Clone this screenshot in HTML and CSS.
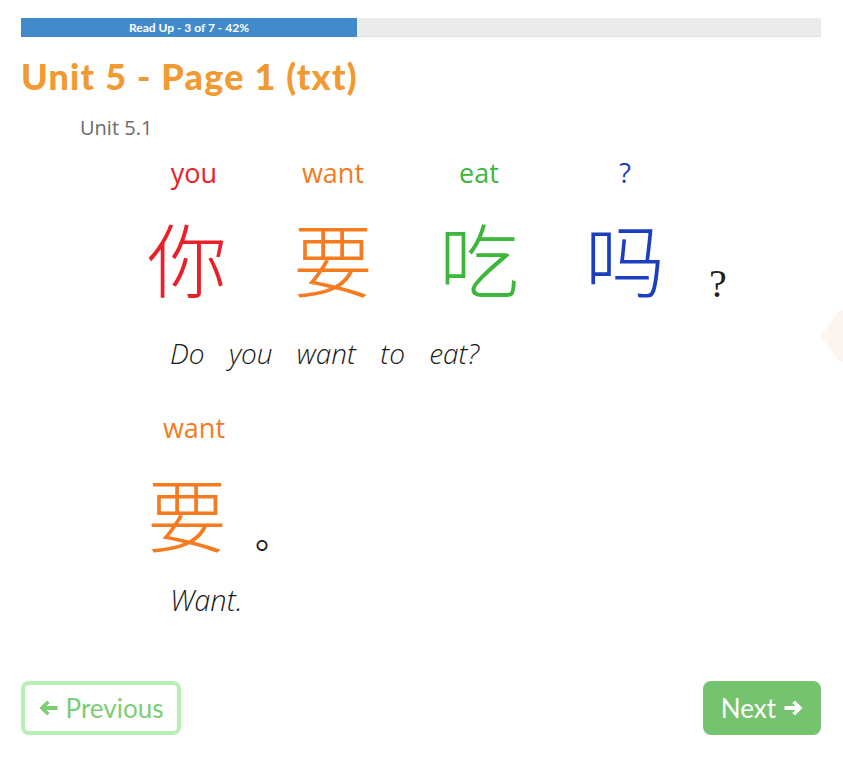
FILE: index.html
```html
<!DOCTYPE html>
<html>
<head>
    <title>Unit 5 - Page 1 (txt)</title>
    <meta name="viewport" content="width=device-width, initial-scale=1.0">
    <link rel="stylesheet" href="styles.css">
</head>
<body>

<div class="progress">
    <div class="progress-bar" style="width: 42%">Read Up - 3 of 7 - 42%</div>
</div>

<h1 class="page-title">Unit 5 - Page 1 (txt)</h1>

<div class="lesson">
    <div class="lesson-label">Unit 5.1</div>

    <div class="sentence">
        <div class="word">
            <span class="gloss red">you</span>
            <span class="hanzi red">你</span>
        </div>
        <div class="word">
            <span class="gloss orange">want</span>
            <span class="hanzi orange">要</span>
        </div>
        <div class="word">
            <span class="gloss green">eat</span>
            <span class="hanzi green">吃</span>
        </div>
        <div class="word">
            <span class="gloss blue">?</span>
            <span class="hanzi blue">吗</span>
        </div>
        <div class="punct question">?</div>
    </div>
    <div class="translation">Do you want to eat?</div>

    <div class="sentence sentence-short">
        <div class="word">
            <span class="gloss orange">want</span>
            <span class="hanzi orange">要</span>
        </div>
        <div class="punct stop">。</div>
    </div>
    <div class="translation translation-short">Want.</div>
</div>

<div class="nav-buttons">
    <button class="btn btn-prev">
        <svg class="btn-icon" width="19" height="16" viewBox="0 0 19 16"><path d="M8 0.5 L0.5 8 L8 15.5 L10.6 12.9 L7.5 10 H18.5 V6 H7.5 L10.6 3.1 Z" fill="currentColor"/></svg>
        Previous
    </button>
    <button class="btn btn-next">
        Next
        <svg class="btn-icon" width="19" height="16" viewBox="0 0 19 16"><path d="M11 0.5 L18.5 8 L11 15.5 L8.4 12.9 L11.5 10 H0.5 V6 H11.5 L8.4 3.1 Z" fill="currentColor"/></svg>
    </button>
</div>

<!-- faint carousel arrow at the right edge -->
<svg class="side-arrow" width="40" height="52" viewBox="0 0 40 52">
    <path d="M18 0 H40 L22 26 L40 52 H18 L0 26 Z" fill="#fdf6f0"/>
</svg>

</body>
</html>
```

FILE: styles.css
```css
body {
    font-family: Lato, "Open Sans", sans-serif;
    margin: 0;
    padding: 18px 22px 0 21px;
    background-color: #fff;
    overflow: hidden;
}
.progress {
    height: 19px;
    background-color: #ebebeb;
    box-shadow: inset 0 -1px 0 #e2e2e2;
}
.progress-bar {
    height: 19px;
    line-height: 19px;
    background-color: #428bca;
    color: #fff;
    font-size: 12px;
    font-weight: bold;
    text-align: center;
}
.page-title {
    margin: 19px 0 0 0;
    font-size: 36px;
    line-height: 40px;
    font-weight: 900;
    letter-spacing: 1.2px;
    color: #f19a32;
}
.lesson {
    font-family: "Open Sans", sans-serif;
}
.lesson-label {
    margin: 20px 0 0 59px;
    font-size: 20px;
    line-height: 24px;
    color: #6a6a6a;
}
.sentence {
    display: grid;
    grid-template-columns: 146px 146px 146px 146px 60px;
    align-items: end;
    margin: 18px 0 0 93px;
}
.word {
    display: flex;
    flex-direction: column;
    align-items: center;
}
.gloss {
    font-size: 27px;
    line-height: 30px;
}
.word:first-child .gloss {
    padding-left: 14px;
}
.hanzi {
    margin-top: 28px;
    font-family: "Noto Sans CJK SC", sans-serif;
    font-size: 80px;
    line-height: 80px;
    font-weight: 300;
}
.punct {
    color: #222;
}
.question {
    padding-left: 11px;
    font-family: "Liberation Serif", serif;
    font-size: 40px;
    line-height: 24px;
}
.stop {
    margin-left: -5px;
    font-family: "Noto Sans CJK SC", sans-serif;
    font-size: 36px;
    line-height: 36px;
}
.sentence-short {
    margin-top: 43px;
}
.translation {
    margin: 40px 0 0 149px;
    font-size: 28px;
    line-height: 34px;
    font-style: italic;
    font-weight: 300;
    color: #1a1a1a;
    word-spacing: 17px;
}
.translation-short {
    margin-top: 32px;
    font-size: 29px;
}
.red { color: #e82029; }
.orange { color: #f57b20; }
.green { color: #3db73b; }
.blue { color: #1b3fbf; }

.nav-buttons {
    display: flex;
    justify-content: space-between;
    margin-top: 64px;
}
.btn {
    display: flex;
    align-items: center;
    justify-content: center;
    gap: 8px;
    height: 54px;
    padding: 0;
    font-family: Lato, sans-serif;
    font-size: 26px;
    border-radius: 8px;
    box-sizing: border-box;
}
.btn-icon {
    flex: none;
}
.btn-prev {
    width: 160px;
    background-color: #fff;
    color: #7ccd76;
    border: 4px solid #b8efb3;
}
.btn-next {
    width: 118px;
    background-color: #75c26f;
    color: #fff;
    border: none;
}
.side-arrow {
    position: absolute;
    top: 310px;
    right: -18px;
}
```
